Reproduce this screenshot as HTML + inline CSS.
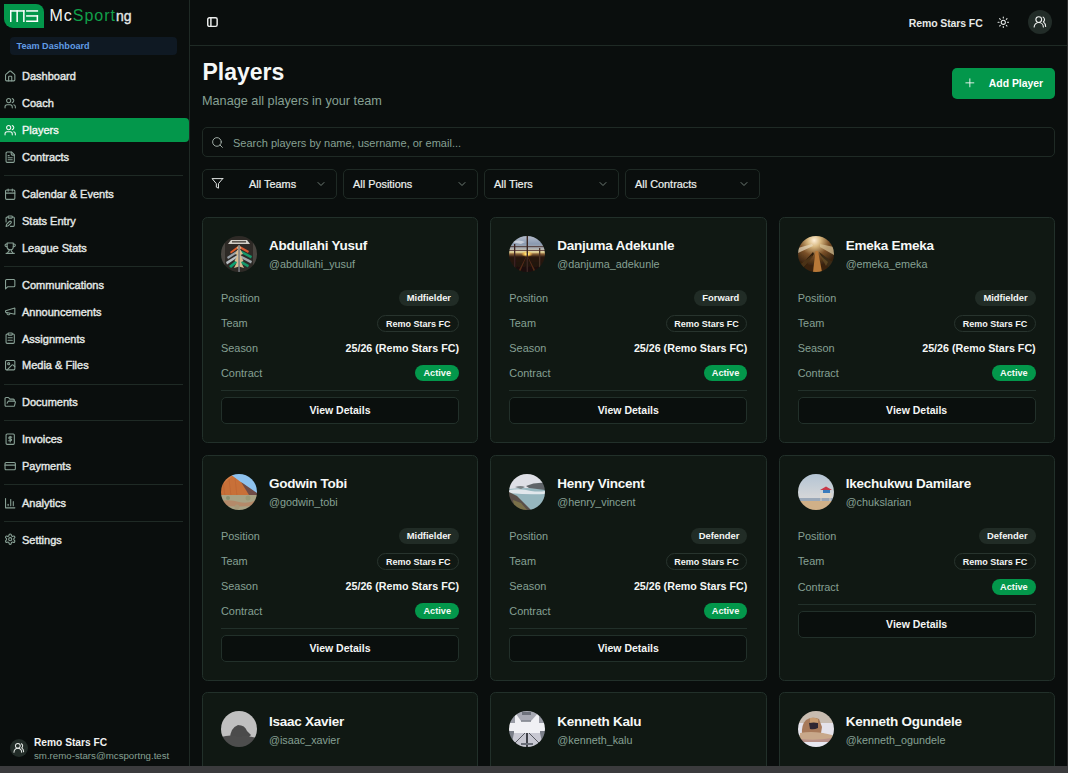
<!DOCTYPE html>
<html><head><meta charset="utf-8"><title>Players</title>
<style>
html,body{margin:0;padding:0;width:1068px;height:773px;overflow:hidden;background:#0a0e0d;font-family:"Liberation Sans", sans-serif;}
body{position:relative;}
</style></head><body>
<div style="position:absolute;left:189px;top:0;width:1px;height:766px;background:#1f2a25"></div>
<svg style="position:absolute;left:4px;top:4px" width="40" height="24" viewBox="0 0 40 24">
<path d="M0 0H32A8 8 0 0 1 40 8V24H9A9 9 0 0 1 0 15Z" fill="#03974b"/>
<g fill="#fff"><rect x="6" y="6.2" width="14.6" height="1.5"/><rect x="6" y="6.2" width="1.5" height="11.8"/><rect x="12.4" y="6.2" width="1.5" height="11.8"/><rect x="19.1" y="6.2" width="1.5" height="11.8"/>
<rect x="22.1" y="6.2" width="12" height="1.5"/><rect x="22.1" y="11.2" width="12" height="1.5"/><rect x="32.6" y="11.2" width="1.5" height="6.8"/><rect x="22.1" y="16.5" width="12" height="1.5"/></g>
</svg>
<div style="position:absolute;left:49.4px;top:8.00px;font-size:16px;line-height:16px;color:#fff;font-weight:400;white-space:nowrap;letter-spacing:1.0px;"><span style="color:#f4f6f5">Mc</span><span style="color:#12a04a">Sport</span><span style="color:#e4e8e6;font-size:14px;letter-spacing:0;-webkit-text-stroke:0.35px #e4e8e6">ng</span></div>
<div style="position:absolute;left:10px;top:37px;width:167px;height:18px;border-radius:4px;background:#0f1923"></div>
<div style="position:absolute;left:16.5px;top:41.66px;font-size:9.1px;line-height:9.1px;color:#609de6;font-weight:700;white-space:nowrap;">Team Dashboard</div>
<svg style="position:absolute;left:3.6px;top:69.7px" width="12.4" height="12.4" viewBox="0 0 24 24" fill="none" stroke="#88a095" stroke-width="2.1" stroke-linecap="round" stroke-linejoin="round"><path d="M15 21v-8a1 1 0 0 0-1-1h-4a1 1 0 0 0-1 1v8"/><path d="M3 10a2 2 0 0 1 .709-1.528l7-5.999a2 2 0 0 1 2.582 0l7 5.999A2 2 0 0 1 21 10v9a2 2 0 0 1-2 2H5a2 2 0 0 1-2-2z"/></svg>
<div style="position:absolute;left:22px;top:71.45px;font-size:11px;line-height:11px;color:#e4e8e6;font-weight:400;white-space:nowrap;-webkit-text-stroke:0.4px currentColor;">Dashboard</div>
<svg style="position:absolute;left:3.6px;top:96.7px" width="12.4" height="12.4" viewBox="0 0 24 24" fill="none" stroke="#88a095" stroke-width="2.1" stroke-linecap="round" stroke-linejoin="round"><path d="M16 21v-2a4 4 0 0 0-4-4H6a4 4 0 0 0-4 4v2"/><circle cx="9" cy="7" r="4"/><path d="M22 21v-2a4 4 0 0 0-3-3.87"/><path d="M16 3.13a4 4 0 0 1 0 7.75"/></svg>
<div style="position:absolute;left:22px;top:98.45px;font-size:11px;line-height:11px;color:#e4e8e6;font-weight:400;white-space:nowrap;-webkit-text-stroke:0.4px currentColor;">Coach</div>
<div style="position:absolute;left:-4px;top:118px;width:193px;height:24px;border-radius:4px;background:#03974b"></div>
<svg style="position:absolute;left:3.6px;top:123.7px" width="12.4" height="12.4" viewBox="0 0 24 24" fill="none" stroke="#eef6f1" stroke-width="2.1" stroke-linecap="round" stroke-linejoin="round"><path d="M16 21v-2a4 4 0 0 0-4-4H6a4 4 0 0 0-4 4v2"/><circle cx="9" cy="7" r="4"/><path d="M22 21v-2a4 4 0 0 0-3-3.87"/><path d="M16 3.13a4 4 0 0 1 0 7.75"/></svg>
<div style="position:absolute;left:22px;top:125.45px;font-size:11px;line-height:11px;color:#f0f5f2;font-weight:400;white-space:nowrap;-webkit-text-stroke:0.4px currentColor;">Players</div>
<svg style="position:absolute;left:3.6px;top:150.7px" width="12.4" height="12.4" viewBox="0 0 24 24" fill="none" stroke="#88a095" stroke-width="2.1" stroke-linecap="round" stroke-linejoin="round"><path d="M15 2H6a2 2 0 0 0-2 2v16a2 2 0 0 0 2 2h12a2 2 0 0 0 2-2V7Z"/><path d="M14 2v4a2 2 0 0 0 2 2h4"/><path d="M10 9H8"/><path d="M16 13H8"/><path d="M16 17H8"/></svg>
<div style="position:absolute;left:22px;top:152.45px;font-size:11px;line-height:11px;color:#e4e8e6;font-weight:400;white-space:nowrap;-webkit-text-stroke:0.4px currentColor;">Contracts</div>
<svg style="position:absolute;left:3.6px;top:187.7px" width="12.4" height="12.4" viewBox="0 0 24 24" fill="none" stroke="#88a095" stroke-width="2.1" stroke-linecap="round" stroke-linejoin="round"><path d="M8 2v4"/><path d="M16 2v4"/><rect width="18" height="18" x="3" y="4" rx="2"/><path d="M3 10h18"/></svg>
<div style="position:absolute;left:22px;top:189.45px;font-size:11px;line-height:11px;color:#e4e8e6;font-weight:400;white-space:nowrap;-webkit-text-stroke:0.4px currentColor;">Calendar &amp; Events</div>
<svg style="position:absolute;left:3.6px;top:214.7px" width="12.4" height="12.4" viewBox="0 0 24 24" fill="none" stroke="#88a095" stroke-width="2.1" stroke-linecap="round" stroke-linejoin="round"><rect width="8" height="4" x="8" y="2" rx="1"/><path d="M10.4 12.6a2 2 0 0 1 3 3L8 21l-4 1 1-4Z"/><path d="M16 4h2a2 2 0 0 1 2 2v14a2 2 0 0 1-2 2h-5.5"/><path d="M4 13.5V6a2 2 0 0 1 2-2h2"/></svg>
<div style="position:absolute;left:22px;top:216.45px;font-size:11px;line-height:11px;color:#e4e8e6;font-weight:400;white-space:nowrap;-webkit-text-stroke:0.4px currentColor;">Stats Entry</div>
<svg style="position:absolute;left:3.6px;top:241.7px" width="12.4" height="12.4" viewBox="0 0 24 24" fill="none" stroke="#88a095" stroke-width="2.1" stroke-linecap="round" stroke-linejoin="round"><path d="M6 9H4.5a2.5 2.5 0 0 1 0-5H6"/><path d="M18 9h1.5a2.5 2.5 0 0 0 0-5H18"/><path d="M4 22h16"/><path d="M10 14.66V17c0 .55-.47.98-.97 1.21C7.85 18.75 7 20.24 7 22"/><path d="M14 14.66V17c0 .55.47.98.97 1.21C16.15 18.75 17 20.24 17 22"/><path d="M18 2H6v7a6 6 0 0 0 12 0V2Z"/></svg>
<div style="position:absolute;left:22px;top:243.45px;font-size:11px;line-height:11px;color:#e4e8e6;font-weight:400;white-space:nowrap;-webkit-text-stroke:0.4px currentColor;">League Stats</div>
<svg style="position:absolute;left:3.6px;top:278.2px" width="12.4" height="12.4" viewBox="0 0 24 24" fill="none" stroke="#88a095" stroke-width="2.1" stroke-linecap="round" stroke-linejoin="round"><path d="M21 15a2 2 0 0 1-2 2H7l-4 4V5a2 2 0 0 1 2-2h14a2 2 0 0 1 2 2z"/></svg>
<div style="position:absolute;left:22px;top:279.95px;font-size:11px;line-height:11px;color:#e4e8e6;font-weight:400;white-space:nowrap;-webkit-text-stroke:0.4px currentColor;">Communications</div>
<svg style="position:absolute;left:3.6px;top:305.2px" width="12.4" height="12.4" viewBox="0 0 24 24" fill="none" stroke="#88a095" stroke-width="2.1" stroke-linecap="round" stroke-linejoin="round"><path d="m3 11 18-5v12L3 14v-3z"/><path d="M11.6 16.8a3 3 0 1 1-5.8-1.6"/></svg>
<div style="position:absolute;left:22px;top:306.95px;font-size:11px;line-height:11px;color:#e4e8e6;font-weight:400;white-space:nowrap;-webkit-text-stroke:0.4px currentColor;">Announcements</div>
<svg style="position:absolute;left:3.6px;top:332.2px" width="12.4" height="12.4" viewBox="0 0 24 24" fill="none" stroke="#88a095" stroke-width="2.1" stroke-linecap="round" stroke-linejoin="round"><rect width="8" height="4" x="8" y="2" rx="1" ry="1"/><path d="M16 4h2a2 2 0 0 1 2 2v14a2 2 0 0 1-2 2H6a2 2 0 0 1-2-2V6a2 2 0 0 1 2-2h2"/><path d="M8 11h8"/><path d="M8 16h8"/></svg>
<div style="position:absolute;left:22px;top:333.95px;font-size:11px;line-height:11px;color:#e4e8e6;font-weight:400;white-space:nowrap;-webkit-text-stroke:0.4px currentColor;">Assignments</div>
<svg style="position:absolute;left:3.6px;top:358.7px" width="12.4" height="12.4" viewBox="0 0 24 24" fill="none" stroke="#88a095" stroke-width="2.1" stroke-linecap="round" stroke-linejoin="round"><rect width="18" height="18" x="3" y="3" rx="2" ry="2"/><circle cx="9" cy="9" r="2"/><path d="m21 15-3.086-3.086a2 2 0 0 0-2.828 0L6 21"/></svg>
<div style="position:absolute;left:22px;top:360.45px;font-size:11px;line-height:11px;color:#e4e8e6;font-weight:400;white-space:nowrap;-webkit-text-stroke:0.4px currentColor;">Media &amp; Files</div>
<svg style="position:absolute;left:3.6px;top:395.7px" width="12.4" height="12.4" viewBox="0 0 24 24" fill="none" stroke="#88a095" stroke-width="2.1" stroke-linecap="round" stroke-linejoin="round"><path d="m6 14 1.5-2.9A2 2 0 0 1 9.24 10H20a2 2 0 0 1 1.94 2.5l-1.54 6a2 2 0 0 1-1.95 1.5H4a2 2 0 0 1-2-2V5a2 2 0 0 1 2-2h3.9a2 2 0 0 1 1.69.9l.81 1.2a2 2 0 0 0 1.67.9H18a2 2 0 0 1 2 2v2"/></svg>
<div style="position:absolute;left:22px;top:397.45px;font-size:11px;line-height:11px;color:#e4e8e6;font-weight:400;white-space:nowrap;-webkit-text-stroke:0.4px currentColor;">Documents</div>
<svg style="position:absolute;left:3.6px;top:432.7px" width="12.4" height="12.4" viewBox="0 0 24 24" fill="none" stroke="#88a095" stroke-width="2.1" stroke-linecap="round" stroke-linejoin="round"><rect x="4" y="2" width="16" height="20" rx="2"/><path d="M15 8h-4a1.5 1.5 0 0 0 0 3.5h2a1.5 1.5 0 0 1 0 3.5H9"/><path d="M12 6.5v11"/></svg>
<div style="position:absolute;left:22px;top:434.45px;font-size:11px;line-height:11px;color:#e4e8e6;font-weight:400;white-space:nowrap;-webkit-text-stroke:0.4px currentColor;">Invoices</div>
<svg style="position:absolute;left:3.6px;top:459.7px" width="12.4" height="12.4" viewBox="0 0 24 24" fill="none" stroke="#88a095" stroke-width="2.1" stroke-linecap="round" stroke-linejoin="round"><rect width="20" height="14" x="2" y="5" rx="2"/><line x1="2" x2="22" y1="10" y2="10"/></svg>
<div style="position:absolute;left:22px;top:461.45px;font-size:11px;line-height:11px;color:#e4e8e6;font-weight:400;white-space:nowrap;-webkit-text-stroke:0.4px currentColor;">Payments</div>
<svg style="position:absolute;left:3.6px;top:496.7px" width="12.4" height="12.4" viewBox="0 0 24 24" fill="none" stroke="#88a095" stroke-width="2.1" stroke-linecap="round" stroke-linejoin="round"><path d="M3 3v18h18"/><path d="M18 17V9"/><path d="M13 17V5"/><path d="M8 17v-3"/></svg>
<div style="position:absolute;left:22px;top:498.45px;font-size:11px;line-height:11px;color:#e4e8e6;font-weight:400;white-space:nowrap;-webkit-text-stroke:0.4px currentColor;">Analytics</div>
<svg style="position:absolute;left:3.6px;top:533.2px" width="12.4" height="12.4" viewBox="0 0 24 24" fill="none" stroke="#88a095" stroke-width="2.1" stroke-linecap="round" stroke-linejoin="round"><path d="M12.22 2h-.44a2 2 0 0 0-2 2v.18a2 2 0 0 1-1 1.73l-.43.25a2 2 0 0 1-2 0l-.15-.08a2 2 0 0 0-2.73.73l-.22.38a2 2 0 0 0 .73 2.73l.15.1a2 2 0 0 1 1 1.72v.51a2 2 0 0 1-1 1.74l-.15.09a2 2 0 0 0-.73 2.73l.22.38a2 2 0 0 0 2.73.73l.15-.08a2 2 0 0 1 2 0l.43.25a2 2 0 0 1 1 1.73V20a2 2 0 0 0 2 2h.44a2 2 0 0 0 2-2v-.18a2 2 0 0 1 1-1.73l.43-.25a2 2 0 0 1 2 0l.15.08a2 2 0 0 0 2.73-.73l.22-.39a2 2 0 0 0-.73-2.730l-.15-.08a2 2 0 0 1-1-1.74v-.5a2 2 0 0 1 1-1.74l.15-.09a2 2 0 0 0 .73-2.73l-.22-.38a2 2 0 0 0-2.73-.73l-.15.08a2 2 0 0 1-2 0l-.43-.25a2 2 0 0 1-1-1.73V4a2 2 0 0 0-2-2z"/><circle cx="12" cy="12" r="3"/></svg>
<div style="position:absolute;left:22px;top:534.95px;font-size:11px;line-height:11px;color:#e4e8e6;font-weight:400;white-space:nowrap;-webkit-text-stroke:0.4px currentColor;">Settings</div>
<div style="position:absolute;left:4px;top:175.0px;width:179px;height:1px;background:#1f2a25"></div>
<div style="position:absolute;left:4px;top:265.5px;width:179px;height:1px;background:#1f2a25"></div>
<div style="position:absolute;left:4px;top:383.5px;width:179px;height:1px;background:#1f2a25"></div>
<div style="position:absolute;left:4px;top:420.0px;width:179px;height:1px;background:#1f2a25"></div>
<div style="position:absolute;left:4px;top:483.5px;width:179px;height:1px;background:#1f2a25"></div>
<div style="position:absolute;left:4px;top:520.5px;width:179px;height:1px;background:#1f2a25"></div>
<div style="position:absolute;left:10px;top:739px;width:18px;height:18px;border-radius:50%;background:#222c28"></div>
<svg style="position:absolute;left:13.2px;top:741.8px" width="11.6" height="11.6" viewBox="0 0 24 24" fill="none" stroke="#e8ece9" stroke-width="2.1" stroke-linecap="round" stroke-linejoin="round"><path d="M18 21a8 8 0 0 0-16 0"/><circle cx="10" cy="8" r="5"/><path d="M22 20c0-3.37-2-6.5-4-8a5 5 0 0 0-.45-8.3"/></svg>
<div style="position:absolute;left:34px;top:738.33px;font-size:10.2px;line-height:10.2px;color:#f0f2f1;font-weight:700;white-space:nowrap;">Remo Stars FC</div>
<div style="position:absolute;left:34px;top:750.75px;font-size:9.7px;line-height:9.7px;color:#86a093;font-weight:400;white-space:nowrap;">sm.remo-stars@mcsportng.test</div>
<div style="position:absolute;left:190px;top:45px;width:877px;height:1px;background:#1f2a25"></div>
<svg style="position:absolute;left:206px;top:16px" width="13" height="12" viewBox="0 0 13 12" fill="none" stroke="#eceeed" stroke-width="1.45"><rect x="1.75" y="1.75" width="9.4" height="8.6" rx="1.6"/><path d="M4.9 1.75v8.6"/></svg>
<div style="position:absolute;left:908.7px;top:17.88px;font-size:10.5px;line-height:10.5px;color:#e6e9e7;font-weight:700;white-space:nowrap;letter-spacing:-0.1px;">Remo Stars FC</div>
<svg style="position:absolute;left:997.3px;top:15.7px" width="12.6" height="12.6" viewBox="0 0 24 24" fill="none" stroke="#e8ecea" stroke-width="2.0" stroke-linecap="round" stroke-linejoin="round"><circle cx="12" cy="12" r="4"/><path d="M12 2v2"/><path d="M12 20v2"/><path d="m4.93 4.93 1.41 1.41"/><path d="m17.66 17.66 1.41 1.41"/><path d="M2 12h2"/><path d="M20 12h2"/><path d="m6.34 17.66-1.41 1.41"/><path d="m19.07 4.93-1.41 1.41"/></svg>
<div style="position:absolute;left:1028px;top:10px;width:24px;height:24px;border-radius:50%;background:#222c28"></div>
<svg style="position:absolute;left:1033.0px;top:15.0px" width="13.8" height="13.8" viewBox="0 0 24 24" fill="none" stroke="#f0f2f1" stroke-width="1.9" stroke-linecap="round" stroke-linejoin="round"><path d="M18 21a8 8 0 0 0-16 0"/><circle cx="10" cy="8" r="5"/><path d="M22 20c0-3.37-2-6.5-4-8a5 5 0 0 0-.45-8.3"/></svg>
<div style="position:absolute;left:202.5px;top:61.45px;font-size:23px;line-height:23px;color:#f6f8f7;font-weight:700;white-space:nowrap;">Players</div>
<div style="position:absolute;left:202px;top:94.50px;font-size:12.7px;line-height:12.7px;color:#86a093;font-weight:400;white-space:nowrap;">Manage all players in your team</div>
<div style="position:absolute;left:952px;top:68px;width:103px;height:31px;border-radius:5px;background:#03974b"></div>
<svg style="position:absolute;left:963.2px;top:76.2px" width="13.7" height="13.7" viewBox="0 0 24 24" fill="none" stroke="#f2f7f4" stroke-width="1.6" stroke-linecap="round" stroke-linejoin="round"><path d="M5 12h14"/><path d="M12 5v14"/></svg>
<div style="position:absolute;left:988.8px;top:78.66px;font-size:10.4px;line-height:10.4px;color:#ffffff;font-weight:700;white-space:nowrap;">Add Player</div>
<div style="position:absolute;left:202px;top:127px;width:851px;height:28px;border:1px solid #1f2a25;border-radius:5px"></div>
<svg style="position:absolute;left:210.6px;top:136.0px" width="13.0" height="13.0" viewBox="0 0 24 24" fill="none" stroke="#a3b0a9" stroke-width="1.8" stroke-linecap="round" stroke-linejoin="round"><circle cx="11" cy="11" r="8"/><path d="m21 21-4.3-4.3"/></svg>
<div style="position:absolute;left:233px;top:138.25px;font-size:11px;line-height:11px;color:#86a093;font-weight:400;white-space:nowrap;">Search players by name, username, or email...</div>
<div style="position:absolute;left:202px;top:169px;width:133px;height:28px;border:1px solid #1f2a25;border-radius:5px"></div>
<svg style="position:absolute;left:211.3px;top:177.4px" width="12.8" height="12.8" viewBox="0 0 24 24" fill="none" stroke="#e8ecea" stroke-width="1.8" stroke-linecap="round" stroke-linejoin="round"><polygon points="22 3 2 3 10 12.46 10 19 14 21 14 12.46 22 3"/></svg>
<div style="position:absolute;left:249.1px;top:178.74px;font-size:10.9px;line-height:10.9px;color:#eef1ef;font-weight:400;white-space:nowrap;-webkit-text-stroke:0.2px currentColor;">All Teams</div>
<svg style="position:absolute;left:314.9px;top:178.3px" width="12" height="12" viewBox="0 0 24 24" fill="none" stroke="#6e7b74" stroke-width="2" stroke-linecap="round" stroke-linejoin="round"><path d="m6 9 6 6 6-6"/></svg>
<div style="position:absolute;left:343px;top:169px;width:133px;height:28px;border:1px solid #1f2a25;border-radius:5px"></div>
<div style="position:absolute;left:353px;top:178.74px;font-size:10.9px;line-height:10.9px;color:#eef1ef;font-weight:400;white-space:nowrap;-webkit-text-stroke:0.2px currentColor;">All Positions</div>
<svg style="position:absolute;left:455.9px;top:178.3px" width="12" height="12" viewBox="0 0 24 24" fill="none" stroke="#6e7b74" stroke-width="2" stroke-linecap="round" stroke-linejoin="round"><path d="m6 9 6 6 6-6"/></svg>
<div style="position:absolute;left:484px;top:169px;width:133px;height:28px;border:1px solid #1f2a25;border-radius:5px"></div>
<div style="position:absolute;left:494px;top:178.74px;font-size:10.9px;line-height:10.9px;color:#eef1ef;font-weight:400;white-space:nowrap;-webkit-text-stroke:0.2px currentColor;">All Tiers</div>
<svg style="position:absolute;left:596.9px;top:178.3px" width="12" height="12" viewBox="0 0 24 24" fill="none" stroke="#6e7b74" stroke-width="2" stroke-linecap="round" stroke-linejoin="round"><path d="m6 9 6 6 6-6"/></svg>
<div style="position:absolute;left:625px;top:169px;width:133px;height:28px;border:1px solid #1f2a25;border-radius:5px"></div>
<div style="position:absolute;left:635px;top:178.74px;font-size:10.9px;line-height:10.9px;color:#eef1ef;font-weight:400;white-space:nowrap;-webkit-text-stroke:0.2px currentColor;">All Contracts</div>
<svg style="position:absolute;left:737.9px;top:178.3px" width="12" height="12" viewBox="0 0 24 24" fill="none" stroke="#6e7b74" stroke-width="2" stroke-linecap="round" stroke-linejoin="round"><path d="m6 9 6 6 6-6"/></svg>
<div style="position:absolute;left:202.00px;top:217px;width:274.33px;height:224px;border:1px solid #22302a;border-radius:5.5px;background:#101813"></div>
<svg style="position:absolute;left:221.00px;top:236px" width="36" height="36" viewBox="0 0 36 36"><clipPath id="c0"><circle cx="18" cy="18" r="18"/></clipPath><defs><filter id="b0" x="-10%" y="-10%" width="120%" height="120%"><feGaussianBlur stdDeviation="0.55"/></filter></defs><g clip-path="url(#c0)"><g filter="url(#b0)"><rect width="36" height="36" fill="#2e2a28"/><rect x="0" y="0" width="4" height="36" fill="#4a4440"/><rect x="32" y="0" width="4" height="36" fill="#4a4440"/>
<path d="M7 8 L10 4 L26 4 L29 8Z" fill="#d2cec6"/><rect x="11" y="5" width="14" height="1.6" fill="#5a5450"/>
<path d="M17 10 L9 16 L10 17.5 L17 12.5Z" fill="#e05a28"/><path d="M19 10 L28 15 L27 17 L19 12.5Z" fill="#d85a30"/>
<path d="M17 14 L6 21 L7 23 L17 16.5Z" fill="#98a0a8"/><path d="M19 14 L31 20 L30 22.5 L19 16.5Z" fill="#14986a"/>
<path d="M17 18.5 L5 26 L6 28.5 L17 21Z" fill="#b8c0c4"/><path d="M19 19 L31 25 L30 27.5 L19 21.5Z" fill="#a0a8ac"/>
<path d="M17 23 L8 30 L10 32 L17 26Z" fill="#10a070"/><path d="M19 24 L28 29 L27 31.5 L19 27Z" fill="#14986a"/>
<path d="M18 9 L15.5 12 L17 13 L14 18 L16.5 19 L13.5 25 L16 26 L13 32 L18 30.5 L23 32 L20 26 L22.5 25 L19.5 19 L22 18 L19 13 L20.5 12Z" fill="#d8bc90"/>
<rect x="17.3" y="9" width="1.5" height="27" fill="#7a7e84"/></g></g></svg>
<div style="position:absolute;left:269.0px;top:239.33px;font-size:13.5px;line-height:13.5px;color:#f6f8f7;font-weight:700;white-space:nowrap;letter-spacing:-0.25px;">Abdullahi Yusuf</div>
<div style="position:absolute;left:269.0px;top:259.12px;font-size:10.8px;line-height:10.8px;color:#86a093;font-weight:400;white-space:nowrap;">@abdullahi_yusuf</div>
<div style="position:absolute;left:221.0px;top:293.13px;font-size:10.9px;line-height:10.9px;color:#86a093;font-weight:400;white-space:nowrap;">Position</div>
<div style="position:absolute;right:609.00px;top:290px;height:16px;padding:0 8px;border-radius:8px;background:#212c26;color:#f4f6f5;font-size:9.4px;font-weight:700;line-height:16px;white-space:nowrap">Midfielder</div>
<div style="position:absolute;left:221.0px;top:318.13px;font-size:10.9px;line-height:10.9px;color:#86a093;font-weight:400;white-space:nowrap;">Team</div>
<div style="position:absolute;right:609.00px;top:315px;height:15px;padding:0 7.5px;border:1px solid #28342e;border-radius:9px;color:#f4f6f5;font-size:9px;font-weight:700;line-height:16.4px;white-space:nowrap">Remo Stars FC</div>
<div style="position:absolute;left:221.0px;top:343.13px;font-size:10.9px;line-height:10.9px;color:#86a093;font-weight:400;white-space:nowrap;">Season</div>
<div style="position:absolute;right:609.00px;top:342.90px;font-size:10.7px;line-height:10.7px;font-weight:700;color:#f4f6f5;white-space:nowrap">25/26 (Remo Stars FC)</div>
<div style="position:absolute;left:221.0px;top:368.13px;font-size:10.9px;line-height:10.9px;color:#86a093;font-weight:400;white-space:nowrap;">Contract</div>
<div style="position:absolute;right:609.00px;top:365px;height:16px;padding:0 8px;border-radius:8px;background:#03974b;color:#f4faf6;font-size:9.2px;font-weight:700;line-height:16px;white-space:nowrap">Active</div>
<div style="position:absolute;left:221.00px;top:390.0px;width:238px;height:1px;background:#22302a"></div>
<div style="position:absolute;left:221.00px;top:397.0px;width:236px;height:25px;border:1px solid #22302a;border-radius:5px;background:#0a0f0d"></div>
<div style="position:absolute;left:340.0px;transform:translateX(-50%);top:404.88px;font-size:10.5px;line-height:10.5px;color:#f4f6f5;font-weight:700;white-space:nowrap;">View Details</div>
<div style="position:absolute;left:490.33px;top:217px;width:274.33px;height:224px;border:1px solid #22302a;border-radius:5.5px;background:#101813"></div>
<svg style="position:absolute;left:509.33px;top:236px" width="36" height="36" viewBox="0 0 36 36"><clipPath id="c1"><circle cx="18" cy="18" r="18"/></clipPath><defs><filter id="b1" x="-10%" y="-10%" width="120%" height="120%"><feGaussianBlur stdDeviation="0.55"/></filter></defs><g clip-path="url(#c1)"><g filter="url(#b1)"><defs><linearGradient id="g1" x1="0" y1="0" x2="0" y2="1"><stop offset="0" stop-color="#b4bccc"/><stop offset="0.22" stop-color="#8a9ab0"/><stop offset="0.36" stop-color="#b0b0b0"/><stop offset="0.45" stop-color="#e8d898"/><stop offset="0.5" stop-color="#8a6038"/><stop offset="0.58" stop-color="#2a1810"/><stop offset="1" stop-color="#1a0e0a"/></linearGradient>
<radialGradient id="s1" cx="0.5" cy="0.5" r="0.5"><stop offset="0" stop-color="#fffbe0"/><stop offset="0.35" stop-color="#ffd860"/><stop offset="1" stop-color="#ffb040" stop-opacity="0"/></radialGradient></defs>
<rect width="36" height="36" fill="url(#g1)"/><path d="M2 6 Q10 3 16 6 L12 8 Z" fill="#e8e8ec" opacity="0.6"/>
<rect x="0" y="10" width="36" height="1.2" fill="#5a4a48"/><rect x="0" y="14" width="36" height="1" fill="#6a5048"/><ellipse cx="18" cy="18" rx="6" ry="3" fill="url(#s1)"/>
<path d="M18 19 L9 36 L11 36Z M18 19 L27 36 L25 36Z" fill="#7a4020" opacity="0.6"/>
<rect x="17.6" y="0" width="1.4" height="36" fill="#3a2820"/><rect x="5" y="8" width="1.3" height="28" fill="#3a2420"/><rect x="30" y="12" width="1.3" height="24" fill="#4a3028"/></g></g></svg>
<div style="position:absolute;left:557.3299999999999px;top:239.33px;font-size:13.5px;line-height:13.5px;color:#f6f8f7;font-weight:700;white-space:nowrap;letter-spacing:-0.25px;">Danjuma Adekunle</div>
<div style="position:absolute;left:557.3299999999999px;top:259.12px;font-size:10.8px;line-height:10.8px;color:#86a093;font-weight:400;white-space:nowrap;">@danjuma_adekunle</div>
<div style="position:absolute;left:509.33px;top:293.13px;font-size:10.9px;line-height:10.9px;color:#86a093;font-weight:400;white-space:nowrap;">Position</div>
<div style="position:absolute;right:320.67px;top:290px;height:16px;padding:0 8px;border-radius:8px;background:#212c26;color:#f4f6f5;font-size:9.4px;font-weight:700;line-height:16px;white-space:nowrap">Forward</div>
<div style="position:absolute;left:509.33px;top:318.13px;font-size:10.9px;line-height:10.9px;color:#86a093;font-weight:400;white-space:nowrap;">Team</div>
<div style="position:absolute;right:320.67px;top:315px;height:15px;padding:0 7.5px;border:1px solid #28342e;border-radius:9px;color:#f4f6f5;font-size:9px;font-weight:700;line-height:16.4px;white-space:nowrap">Remo Stars FC</div>
<div style="position:absolute;left:509.33px;top:343.13px;font-size:10.9px;line-height:10.9px;color:#86a093;font-weight:400;white-space:nowrap;">Season</div>
<div style="position:absolute;right:320.67px;top:342.90px;font-size:10.7px;line-height:10.7px;font-weight:700;color:#f4f6f5;white-space:nowrap">25/26 (Remo Stars FC)</div>
<div style="position:absolute;left:509.33px;top:368.13px;font-size:10.9px;line-height:10.9px;color:#86a093;font-weight:400;white-space:nowrap;">Contract</div>
<div style="position:absolute;right:320.67px;top:365px;height:16px;padding:0 8px;border-radius:8px;background:#03974b;color:#f4faf6;font-size:9.2px;font-weight:700;line-height:16px;white-space:nowrap">Active</div>
<div style="position:absolute;left:509.33px;top:390.0px;width:238px;height:1px;background:#22302a"></div>
<div style="position:absolute;left:509.33px;top:397.0px;width:236px;height:25px;border:1px solid #22302a;border-radius:5px;background:#0a0f0d"></div>
<div style="position:absolute;left:628.3299999999999px;transform:translateX(-50%);top:404.88px;font-size:10.5px;line-height:10.5px;color:#f4f6f5;font-weight:700;white-space:nowrap;">View Details</div>
<div style="position:absolute;left:778.66px;top:217px;width:274.33px;height:224px;border:1px solid #22302a;border-radius:5.5px;background:#101813"></div>
<svg style="position:absolute;left:797.66px;top:236px" width="36" height="36" viewBox="0 0 36 36"><clipPath id="c2"><circle cx="18" cy="18" r="18"/></clipPath><defs><filter id="b2" x="-10%" y="-10%" width="120%" height="120%"><feGaussianBlur stdDeviation="0.55"/></filter></defs><g clip-path="url(#c2)"><g filter="url(#b2)"><defs><radialGradient id="g2" cx="0.45" cy="0.12" r="0.7"><stop offset="0" stop-color="#fff0d8"/><stop offset="0.25" stop-color="#d8b880"/><stop offset="0.6" stop-color="#7a5028"/><stop offset="1" stop-color="#3a2410"/></radialGradient></defs>
<rect width="36" height="36" fill="url(#g2)"/><path d="M0 12 L14 8 L15 10 L0 17Z" fill="#e8dcc0" opacity="0.7"/><path d="M36 11 L22 8 L22 11 L36 19Z" fill="#d8c498" opacity="0.7"/>
<path d="M15 36 L17.5 15 L20 15 L24 36Z" fill="#b87838"/><path d="M0 33 L15 16 L16 18 L3 36Z" fill="#2a1c0c"/><path d="M36 27 L21 16 L22 18 L33 36Z" fill="#3a2c14"/>
<path d="M3 28 L14 19 L15 21 L5 32Z" fill="#5a3a18" opacity="0.7"/><path d="M30 26 L22 19 L23 21 L28 30Z" fill="#6a5028" opacity="0.7"/></g></g></svg>
<div style="position:absolute;left:845.66px;top:239.33px;font-size:13.5px;line-height:13.5px;color:#f6f8f7;font-weight:700;white-space:nowrap;letter-spacing:-0.25px;">Emeka Emeka</div>
<div style="position:absolute;left:845.66px;top:259.12px;font-size:10.8px;line-height:10.8px;color:#86a093;font-weight:400;white-space:nowrap;">@emeka_emeka</div>
<div style="position:absolute;left:797.66px;top:293.13px;font-size:10.9px;line-height:10.9px;color:#86a093;font-weight:400;white-space:nowrap;">Position</div>
<div style="position:absolute;right:32.34px;top:290px;height:16px;padding:0 8px;border-radius:8px;background:#212c26;color:#f4f6f5;font-size:9.4px;font-weight:700;line-height:16px;white-space:nowrap">Midfielder</div>
<div style="position:absolute;left:797.66px;top:318.13px;font-size:10.9px;line-height:10.9px;color:#86a093;font-weight:400;white-space:nowrap;">Team</div>
<div style="position:absolute;right:32.34px;top:315px;height:15px;padding:0 7.5px;border:1px solid #28342e;border-radius:9px;color:#f4f6f5;font-size:9px;font-weight:700;line-height:16.4px;white-space:nowrap">Remo Stars FC</div>
<div style="position:absolute;left:797.66px;top:343.13px;font-size:10.9px;line-height:10.9px;color:#86a093;font-weight:400;white-space:nowrap;">Season</div>
<div style="position:absolute;right:32.34px;top:342.90px;font-size:10.7px;line-height:10.7px;font-weight:700;color:#f4f6f5;white-space:nowrap">25/26 (Remo Stars FC)</div>
<div style="position:absolute;left:797.66px;top:368.13px;font-size:10.9px;line-height:10.9px;color:#86a093;font-weight:400;white-space:nowrap;">Contract</div>
<div style="position:absolute;right:32.34px;top:365px;height:16px;padding:0 8px;border-radius:8px;background:#03974b;color:#f4faf6;font-size:9.2px;font-weight:700;line-height:16px;white-space:nowrap">Active</div>
<div style="position:absolute;left:797.66px;top:390.0px;width:238px;height:1px;background:#22302a"></div>
<div style="position:absolute;left:797.66px;top:397.0px;width:236px;height:25px;border:1px solid #22302a;border-radius:5px;background:#0a0f0d"></div>
<div style="position:absolute;left:916.66px;transform:translateX(-50%);top:404.88px;font-size:10.5px;line-height:10.5px;color:#f4f6f5;font-weight:700;white-space:nowrap;">View Details</div>
<div style="position:absolute;left:202.00px;top:455px;width:274.33px;height:224px;border:1px solid #22302a;border-radius:5.5px;background:#101813"></div>
<svg style="position:absolute;left:221.00px;top:474px" width="36" height="36" viewBox="0 0 36 36"><clipPath id="c3"><circle cx="18" cy="18" r="18"/></clipPath><defs><filter id="b3" x="-10%" y="-10%" width="120%" height="120%"><feGaussianBlur stdDeviation="0.55"/></filter></defs><g clip-path="url(#c3)"><g filter="url(#b3)"><rect width="36" height="36" fill="#c87038"/><path d="M0 0 L14 0 L4 8 L0 12Z" fill="#d88048"/><path d="M9 0 L36 0 L36 20 Z" fill="#8ec2ee"/><path d="M20 8 L36 19 L36 22 L28 21Z" fill="#6e4c46"/>
<path d="M2 8 L4 22 M8 5 L10 22 M14 4 L16 22" stroke="#b86030" stroke-width="0.8" opacity="0.6"/>
<rect x="0" y="21" width="36" height="15" fill="#a8a284"/><path d="M0 27 Q9 25 18 28 Q27 30 36 26 L36 31 Q18 34 0 31Z" fill="#b48a6a"/><circle cx="7" cy="24" r="2" fill="#8a9070"/><circle cx="27" cy="24" r="2.5" fill="#9a9a78"/><circle cx="16" cy="33" r="2.5" fill="#a89878"/></g></g></svg>
<div style="position:absolute;left:269.0px;top:477.32px;font-size:13.5px;line-height:13.5px;color:#f6f8f7;font-weight:700;white-space:nowrap;letter-spacing:-0.25px;">Godwin Tobi</div>
<div style="position:absolute;left:269.0px;top:497.12px;font-size:10.8px;line-height:10.8px;color:#86a093;font-weight:400;white-space:nowrap;">@godwin_tobi</div>
<div style="position:absolute;left:221.0px;top:531.13px;font-size:10.9px;line-height:10.9px;color:#86a093;font-weight:400;white-space:nowrap;">Position</div>
<div style="position:absolute;right:609.00px;top:528px;height:16px;padding:0 8px;border-radius:8px;background:#212c26;color:#f4f6f5;font-size:9.4px;font-weight:700;line-height:16px;white-space:nowrap">Midfielder</div>
<div style="position:absolute;left:221.0px;top:556.13px;font-size:10.9px;line-height:10.9px;color:#86a093;font-weight:400;white-space:nowrap;">Team</div>
<div style="position:absolute;right:609.00px;top:553px;height:15px;padding:0 7.5px;border:1px solid #28342e;border-radius:9px;color:#f4f6f5;font-size:9px;font-weight:700;line-height:16.4px;white-space:nowrap">Remo Stars FC</div>
<div style="position:absolute;left:221.0px;top:581.13px;font-size:10.9px;line-height:10.9px;color:#86a093;font-weight:400;white-space:nowrap;">Season</div>
<div style="position:absolute;right:609.00px;top:580.90px;font-size:10.7px;line-height:10.7px;font-weight:700;color:#f4f6f5;white-space:nowrap">25/26 (Remo Stars FC)</div>
<div style="position:absolute;left:221.0px;top:606.13px;font-size:10.9px;line-height:10.9px;color:#86a093;font-weight:400;white-space:nowrap;">Contract</div>
<div style="position:absolute;right:609.00px;top:603px;height:16px;padding:0 8px;border-radius:8px;background:#03974b;color:#f4faf6;font-size:9.2px;font-weight:700;line-height:16px;white-space:nowrap">Active</div>
<div style="position:absolute;left:221.00px;top:628.0px;width:238px;height:1px;background:#22302a"></div>
<div style="position:absolute;left:221.00px;top:635.0px;width:236px;height:25px;border:1px solid #22302a;border-radius:5px;background:#0a0f0d"></div>
<div style="position:absolute;left:340.0px;transform:translateX(-50%);top:642.88px;font-size:10.5px;line-height:10.5px;color:#f4f6f5;font-weight:700;white-space:nowrap;">View Details</div>
<div style="position:absolute;left:490.33px;top:455px;width:274.33px;height:224px;border:1px solid #22302a;border-radius:5.5px;background:#101813"></div>
<svg style="position:absolute;left:509.33px;top:474px" width="36" height="36" viewBox="0 0 36 36"><clipPath id="c4"><circle cx="18" cy="18" r="18"/></clipPath><defs><filter id="b4" x="-10%" y="-10%" width="120%" height="120%"><feGaussianBlur stdDeviation="0.55"/></filter></defs><g clip-path="url(#c4)"><g filter="url(#b4)"><rect width="36" height="36" fill="#dedfe6"/><path d="M0 15 Q18 13 36 15 L36 36 L0 36Z" fill="#96b6be"/><path d="M17 12 Q26 8 36 9 L36 16 Q28 15 20 14Z" fill="#5e6468"/><path d="M6 13 Q12 11 16 13 L12 15Z" fill="#7a8084"/>
<path d="M0 16 Q12 14 22 17 Q30 18 36 17 L36 20 Q20 21 0 19Z" fill="#eef0f4" opacity="0.85"/><path d="M0 18 L8 22 L16 30 L22 36 L0 36Z" fill="#5a5048"/><path d="M4 26 L12 29 L18 36 L6 36Z" fill="#7a7048"/></g></g></svg>
<div style="position:absolute;left:557.3299999999999px;top:477.32px;font-size:13.5px;line-height:13.5px;color:#f6f8f7;font-weight:700;white-space:nowrap;letter-spacing:-0.25px;">Henry Vincent</div>
<div style="position:absolute;left:557.3299999999999px;top:497.12px;font-size:10.8px;line-height:10.8px;color:#86a093;font-weight:400;white-space:nowrap;">@henry_vincent</div>
<div style="position:absolute;left:509.33px;top:531.13px;font-size:10.9px;line-height:10.9px;color:#86a093;font-weight:400;white-space:nowrap;">Position</div>
<div style="position:absolute;right:320.67px;top:528px;height:16px;padding:0 8px;border-radius:8px;background:#212c26;color:#f4f6f5;font-size:9.4px;font-weight:700;line-height:16px;white-space:nowrap">Defender</div>
<div style="position:absolute;left:509.33px;top:556.13px;font-size:10.9px;line-height:10.9px;color:#86a093;font-weight:400;white-space:nowrap;">Team</div>
<div style="position:absolute;right:320.67px;top:553px;height:15px;padding:0 7.5px;border:1px solid #28342e;border-radius:9px;color:#f4f6f5;font-size:9px;font-weight:700;line-height:16.4px;white-space:nowrap">Remo Stars FC</div>
<div style="position:absolute;left:509.33px;top:581.13px;font-size:10.9px;line-height:10.9px;color:#86a093;font-weight:400;white-space:nowrap;">Season</div>
<div style="position:absolute;right:320.67px;top:580.90px;font-size:10.7px;line-height:10.7px;font-weight:700;color:#f4f6f5;white-space:nowrap">25/26 (Remo Stars FC)</div>
<div style="position:absolute;left:509.33px;top:606.13px;font-size:10.9px;line-height:10.9px;color:#86a093;font-weight:400;white-space:nowrap;">Contract</div>
<div style="position:absolute;right:320.67px;top:603px;height:16px;padding:0 8px;border-radius:8px;background:#03974b;color:#f4faf6;font-size:9.2px;font-weight:700;line-height:16px;white-space:nowrap">Active</div>
<div style="position:absolute;left:509.33px;top:628.0px;width:238px;height:1px;background:#22302a"></div>
<div style="position:absolute;left:509.33px;top:635.0px;width:236px;height:25px;border:1px solid #22302a;border-radius:5px;background:#0a0f0d"></div>
<div style="position:absolute;left:628.3299999999999px;transform:translateX(-50%);top:642.88px;font-size:10.5px;line-height:10.5px;color:#f4f6f5;font-weight:700;white-space:nowrap;">View Details</div>
<div style="position:absolute;left:778.66px;top:455px;width:274.33px;height:224px;border:1px solid #22302a;border-radius:5.5px;background:#101813"></div>
<svg style="position:absolute;left:797.66px;top:474px" width="36" height="36" viewBox="0 0 36 36"><clipPath id="c5"><circle cx="18" cy="18" r="18"/></clipPath><defs><filter id="b5" x="-10%" y="-10%" width="120%" height="120%"><feGaussianBlur stdDeviation="0.55"/></filter></defs><g clip-path="url(#c5)"><g filter="url(#b5)"><defs><linearGradient id="g5" x1="0" y1="0" x2="0" y2="1"><stop offset="0" stop-color="#b4c4d4"/><stop offset="0.65" stop-color="#d4d6d8"/></linearGradient></defs>
<rect width="36" height="36" fill="url(#g5)"/><rect x="0" y="24" width="36" height="3" fill="#9aa8b8"/><rect x="0" y="27" width="36" height="9" fill="#d0b088"/>
<path d="M22 16 L28 12.5 L34 16Z" fill="#c83848"/><rect x="25" y="16" width="7" height="3.2" fill="#3a7cbc"/><rect x="22" y="19" width="11.5" height="5" fill="#e0d8cc"/><path d="M23 24 L23 27 M32 24 L32 27" stroke="#d8d0c4" stroke-width="1"/></g></g></svg>
<div style="position:absolute;left:845.66px;top:477.32px;font-size:13.5px;line-height:13.5px;color:#f6f8f7;font-weight:700;white-space:nowrap;letter-spacing:-0.25px;">Ikechukwu Damilare</div>
<div style="position:absolute;left:845.66px;top:497.12px;font-size:10.8px;line-height:10.8px;color:#86a093;font-weight:400;white-space:nowrap;">@chukslarian</div>
<div style="position:absolute;left:797.66px;top:531.13px;font-size:10.9px;line-height:10.9px;color:#86a093;font-weight:400;white-space:nowrap;">Position</div>
<div style="position:absolute;right:32.34px;top:528px;height:16px;padding:0 8px;border-radius:8px;background:#212c26;color:#f4f6f5;font-size:9.4px;font-weight:700;line-height:16px;white-space:nowrap">Defender</div>
<div style="position:absolute;left:797.66px;top:556.13px;font-size:10.9px;line-height:10.9px;color:#86a093;font-weight:400;white-space:nowrap;">Team</div>
<div style="position:absolute;right:32.34px;top:553px;height:15px;padding:0 7.5px;border:1px solid #28342e;border-radius:9px;color:#f4f6f5;font-size:9px;font-weight:700;line-height:16.4px;white-space:nowrap">Remo Stars FC</div>
<div style="position:absolute;left:797.66px;top:582.13px;font-size:10.9px;line-height:10.9px;color:#86a093;font-weight:400;white-space:nowrap;">Contract</div>
<div style="position:absolute;right:32.34px;top:579px;height:16px;padding:0 8px;border-radius:8px;background:#03974b;color:#f4faf6;font-size:9.2px;font-weight:700;line-height:16px;white-space:nowrap">Active</div>
<div style="position:absolute;left:797.66px;top:604.0px;width:238px;height:1px;background:#22302a"></div>
<div style="position:absolute;left:797.66px;top:611.0px;width:236px;height:25px;border:1px solid #22302a;border-radius:5px;background:#0a0f0d"></div>
<div style="position:absolute;left:916.66px;transform:translateX(-50%);top:618.88px;font-size:10.5px;line-height:10.5px;color:#f4f6f5;font-weight:700;white-space:nowrap;">View Details</div>
<div style="position:absolute;left:202.00px;top:692.4px;width:274.33px;height:224px;border:1px solid #22302a;border-radius:5.5px;background:#101813"></div>
<svg style="position:absolute;left:221.00px;top:711.4px" width="36" height="36" viewBox="0 0 36 36"><clipPath id="c6"><circle cx="18" cy="18" r="18"/></clipPath><defs><filter id="b6" x="-10%" y="-10%" width="120%" height="120%"><feGaussianBlur stdDeviation="0.55"/></filter></defs><g clip-path="url(#c6)"><g filter="url(#b6)"><rect width="36" height="36" fill="#c0c0c0"/><path d="M9 28 Q9 17 17 14 Q24 14 26 20 L30 24 L28 26 L29 28Z" fill="#4c4c4c"/><path d="M0 26 Q10 23 18 26 Q26 24 36 27 L36 36 L0 36Z" fill="#4e4e4e"/></g></g></svg>
<div style="position:absolute;left:269.0px;top:714.72px;font-size:13.5px;line-height:13.5px;color:#f6f8f7;font-weight:700;white-space:nowrap;letter-spacing:-0.25px;">Isaac Xavier</div>
<div style="position:absolute;left:269.0px;top:734.52px;font-size:10.8px;line-height:10.8px;color:#86a093;font-weight:400;white-space:nowrap;">@isaac_xavier</div>
<div style="position:absolute;left:490.33px;top:692.4px;width:274.33px;height:224px;border:1px solid #22302a;border-radius:5.5px;background:#101813"></div>
<svg style="position:absolute;left:509.33px;top:711.4px" width="36" height="36" viewBox="0 0 36 36"><clipPath id="c7"><circle cx="18" cy="18" r="18"/></clipPath><defs><filter id="b7" x="-10%" y="-10%" width="120%" height="120%"><feGaussianBlur stdDeviation="0.55"/></filter></defs><g clip-path="url(#c7)"><g filter="url(#b7)"><rect width="36" height="36" fill="#f0f0f4"/><path d="M5 0 L31 0 L22 10 L12 10Z" fill="#a8aab4"/><rect x="13" y="1" width="9" height="3" fill="#6e727c"/><rect x="12" y="9.5" width="10" height="1.2" fill="#6e727c"/>
<path d="M0 3 L6 3 L6 12 L0 12Z" fill="#9a9ca6"/><path d="M30 3 L36 3 L36 12 L30 12Z" fill="#9a9ca6"/>
<path d="M0 20 L5 20 L5 30 L0 30Z" fill="#7a7e88"/><path d="M31 20 L36 20 L36 30 L31 30Z" fill="#7a7e88"/>
<path d="M5 22 L31 22 L34 36 L2 36Z" fill="#c8c8d2"/><path d="M16 22 L6 32" stroke="#3a3c44" stroke-width="0.8"/><path d="M20 22 L30 32" stroke="#3a3c44" stroke-width="0.8"/><rect x="17.2" y="22" width="1.6" height="14" fill="#202228"/><rect x="12" y="32" width="12" height="2" fill="#6a6e78"/></g></g></svg>
<div style="position:absolute;left:557.3299999999999px;top:714.72px;font-size:13.5px;line-height:13.5px;color:#f6f8f7;font-weight:700;white-space:nowrap;letter-spacing:-0.25px;">Kenneth Kalu</div>
<div style="position:absolute;left:557.3299999999999px;top:734.52px;font-size:10.8px;line-height:10.8px;color:#86a093;font-weight:400;white-space:nowrap;">@kenneth_kalu</div>
<div style="position:absolute;left:778.66px;top:692.4px;width:274.33px;height:224px;border:1px solid #22302a;border-radius:5.5px;background:#101813"></div>
<svg style="position:absolute;left:797.66px;top:711.4px" width="36" height="36" viewBox="0 0 36 36"><clipPath id="c8"><circle cx="18" cy="18" r="18"/></clipPath><defs><filter id="b8" x="-10%" y="-10%" width="120%" height="120%"><feGaussianBlur stdDeviation="0.55"/></filter></defs><g clip-path="url(#c8)"><g filter="url(#b8)"><rect width="36" height="36" fill="#c8bcb0"/><rect x="0" y="12" width="36" height="12" fill="#e4e2ea"/><path d="M4 24 Q3 14 8 9 Q14 5 21 8 L24 16 L23 22 L30 24 L34 30 L4 32Z" fill="#a87a5a"/><path d="M12 7 Q16 6 20 8 L20 14 L12 14Z" fill="#c89c70"/>
<path d="M11 12 Q16 11 20 12 L20 17 Q16 19 12 18Z" fill="#2e2830"/><path d="M2 22 Q16 19 34 24 L34 32 L2 32Z" fill="#c8a88a"/><path d="M2 28 Q18 30 34 27 L34 32 L2 32Z" fill="#b89088"/><rect x="0" y="31" width="36" height="5" fill="#e8e8f2"/></g></g></svg>
<div style="position:absolute;left:845.66px;top:714.72px;font-size:13.5px;line-height:13.5px;color:#f6f8f7;font-weight:700;white-space:nowrap;letter-spacing:-0.25px;">Kenneth Ogundele</div>
<div style="position:absolute;left:845.66px;top:734.52px;font-size:10.8px;line-height:10.8px;color:#86a093;font-weight:400;white-space:nowrap;">@kenneth_ogundele</div>
<div style="position:absolute;left:0;top:766px;width:1068px;height:7px;background:#3b3b3d"></div>
<div style="position:absolute;left:1067px;top:0;width:1px;height:766px;background:#2f2f2f"></div>

</body></html>
